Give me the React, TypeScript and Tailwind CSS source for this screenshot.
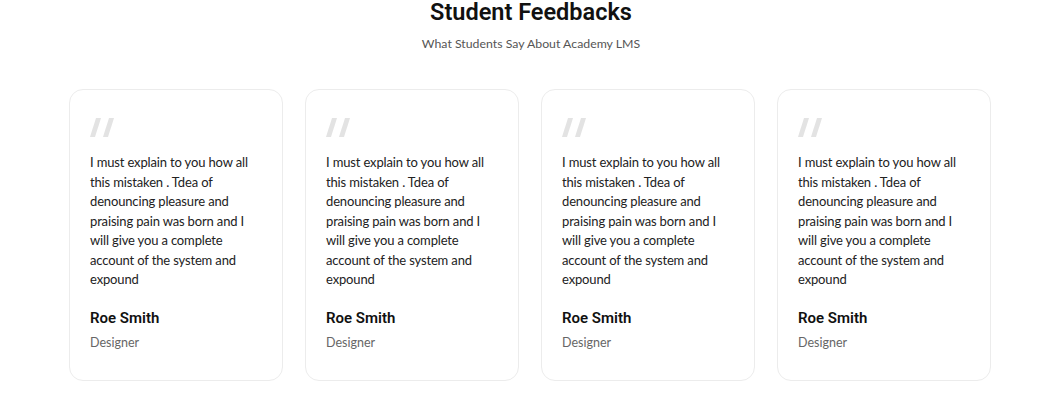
const feedbacks = Array.from({ length: 4 }, (_, i) => ({
  id: i,
  text: "I must explain to you how all this mistaken . Tdea of denouncing pleasure and praising pain was born and I will give you a complete account of the system and expound",
  name: "Roe Smith",
  role: "Designer",
}));

function QuoteMark() {
  return (
    <svg className="block" width="25" height="19" viewBox="0 0 25 19" fill="#e3e3e3">
      <polygon points="6,0 11,0 5,19 0,19" />
      <polygon points="19,0 24,0 18,19 13,19" />
    </svg>
  );
}

export default function App() {
  return (
    <div className="w-[1062px] h-[406px] bg-white font-['Lato',sans-serif]">
      {/* Heading */}
      <div className="text-center">
        <h2 className="font-['Roboto',sans-serif] font-semibold text-[23.5px] leading-[24px] text-[#111]">
          Student Feedbacks
        </h2>
        <p className="mt-[11px] text-[12.3px] leading-[18px] text-[#555]">
          What Students Say About Academy LMS
        </p>
      </div>

      {/* Cards */}
      <div className="grid grid-cols-4 gap-[22px] pl-[69px] pr-[71px] mt-[36px]">
        {feedbacks.map((f) => (
          <div
            key={f.id}
            className="border border-[#ececec] rounded-[14px] h-[292px] px-[20px] pt-[28px]"
          >
            <QuoteMark />
            <p className="mt-[16px] w-[170px] text-[13px] tracking-[-0.15px] leading-[19.5px] text-[#222]">
              {f.text}
            </p>
            <h4 className="mt-[18px] font-['Roboto',sans-serif] font-semibold text-[15px] leading-[20px] text-[#111]">
              {f.name}
            </h4>
            <p className="mt-[6px] text-[12.5px] leading-[18px] text-[#666]">{f.role}</p>
          </div>
        ))}
      </div>
    </div>
  );
}
